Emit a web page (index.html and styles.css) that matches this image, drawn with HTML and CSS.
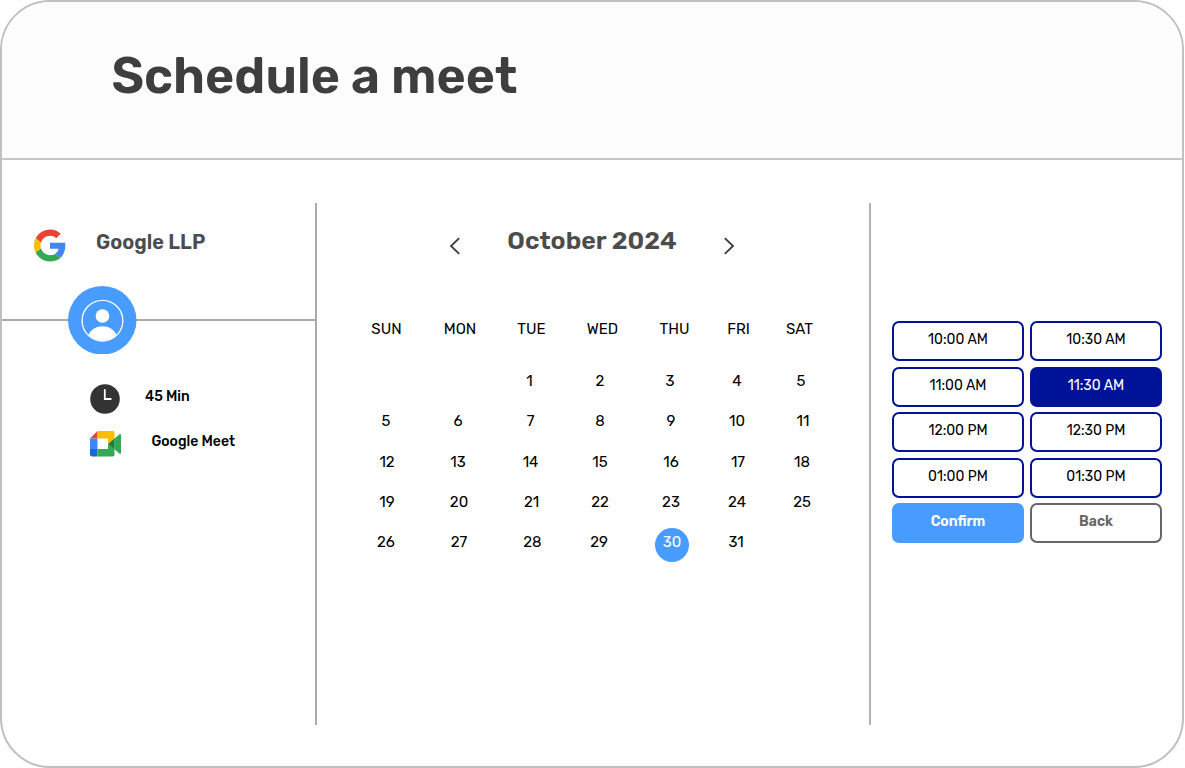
FILE: index.html
```html
<!DOCTYPE html>
<html lang="en">
<head>
<meta charset="utf-8">
<title>Schedule a meet</title>
<link rel="stylesheet" href="styles.css">
</head>
<body>
<main class="card">
  <header class="card-header"><h1 class="title">Schedule a meet</h1></header>
  <div class="panels">
    <aside class="info">
      <div class="company">
        <svg class="google" viewBox="0 0 48 48"><path fill="#EA4335" d="M24 9.5c3.54 0 6.71 1.22 9.21 3.6l6.85-6.85C35.9 2.38 30.47 0 24 0 14.62 0 6.51 5.38 2.56 13.22l7.98 6.19C12.43 13.72 17.74 9.5 24 9.5z"/><path fill="#4285F4" d="M46.98 24.55c0-1.57-.15-3.09-.38-4.55H24v9.02h12.94c-.58 2.96-2.26 5.48-4.78 7.18l7.73 6c4.51-4.18 7.09-10.36 7.09-17.65z"/><path fill="#FBBC05" d="M10.53 28.59c-.48-1.45-.76-2.99-.76-4.59s.27-3.14.76-4.59l-7.98-6.19C.92 16.46 0 20.12 0 24c0 3.88.92 7.54 2.56 10.78l7.97-6.19z"/><path fill="#34A853" d="M24 48c6.48 0 11.93-2.13 15.89-5.81l-7.73-6c-2.15 1.45-4.92 2.3-8.16 2.3-6.26 0-11.57-4.22-13.47-9.91l-7.98 6.19C6.51 42.62 14.62 48 24 48z"/></svg>
        <h2 class="company-name">Google LLP</h2>
      </div>
      <div class="divider">
        <svg class="avatar" viewBox="0 0 68 68"><circle cx="34" cy="34" r="34" fill="#489bff"/><circle cx="34.2" cy="34.4" r="20.2" fill="none" stroke="#fff" stroke-width="1.3"/><circle cx="34.2" cy="29.8" r="6.8" fill="#fff"/><path fill="#fff" d="M20.2 48.6C23 43.300 28 40 34.200 40s11.200 3.300 14 8.600a20.400 20.400 0 0 1-28 0z"/></svg>
      </div>
      <ul class="details">
        <li class="detail">
          <svg class="clock" viewBox="0 0 30 30"><circle cx="15" cy="15" r="14.800" fill="#333"/><path d="M14.800 5.800v9.200h6" fill="none" stroke="#fff" stroke-width="1.800" stroke-linecap="round"/></svg>
          <span class="duration">45 Min</span>
        </li>
        <li class="detail">
          <svg class="meet" viewBox="0 0 31 26"><path fill="#ea4335" d="M0 7.500 7.500 0v7.500z"/><path fill="#4285f4" d="M0 7.500h7.500V18H0z"/><path fill="#1967d2" d="M0 18h7.500v7.500H2a2 2 0 0 1-2-2z"/><path fill="#fbbc04" d="M7.500 0H22.500a2 2 0 0 1 2 2v6.500L18 13V7.500H7.500z"/><path fill="#34a853" d="M7.500 18H18v-5l6.500 5v5.500a2 2 0 0 1-2 2h-15z"/><path fill="#34a853" d="M24.500 7.500 29.300 3.400Q31 2.300 31 4v18q0 1.500-1.700.4L24.500 18.200z"/><path fill="#188038" d="M18 13l6.500-5.500v10.700z"/></svg>
          <span class="platform">Google Meet</span>
        </li>
      </ul>
    </aside>

    <section class="calendar">
      <div class="month-bar">
        <svg class="arrow" viewBox="0 0 12 18"><path d="M10.200 1.200 2 9l8.200 7.800"/></svg>
        <h2 class="month">October 2024</h2>
        <svg class="arrow" viewBox="0 0 12 18"><path d="M1.800 1.200 10 9l-8.200 7.800"/></svg>
      </div>
      <div class="weekdays"><span>SUN</span><span>MON</span><span>TUE</span><span>WED</span><span>THU</span><span>FRI</span><span>SAT</span></div>
      <div class="weeks">
        <div class="week"><span></span><span></span><span class="early">1</span><span>2</span><span class="early">3</span><span>4</span><span class="early">5</span></div>
        <div class="week"><span>5</span><span>6</span><span>7</span><span>8</span><span>9</span><span>10</span><span class="late">11</span></div>
        <div class="week"><span class="late">12</span><span>13</span><span>14</span><span>15</span><span>16</span><span class="late">17</span><span>18</span></div>
        <div class="week"><span class="late">19</span><span class="late">20</span><span class="late">21</span><span>22</span><span>23</span><span>24</span><span>25</span></div>
        <div class="week"><span>26</span><span class="late">27</span><span class="later">28</span><span class="early">29</span><span class="late"><b class="selected">30</b></span><span class="early">31</span><span></span></div>
      </div>
    </section>

    <section class="times">
      <div class="slots">
        <button class="slot">10:00 AM</button><button class="slot">10:30 AM</button>
        <button class="slot low">11:00 AM</button><button class="slot low chosen">11:30 AM</button>
        <button class="slot">12:00 PM</button><button class="slot">12:30 PM</button>
        <button class="slot low">01:00 PM</button><button class="slot low">01:30 PM</button>
        <button class="slot confirm">Confirm</button><button class="slot back">Back</button>
      </div>
    </section>
  </div>
</main>
</body>
</html>
```
FILE: styles.css
```css
* { box-sizing: border-box; }
body { margin: 0; background: #fff; font-family: Rubik, Roboto, sans-serif; color: #000; }
h1, h2, ul { margin: 0; padding: 0; }
svg { display: block; flex: none; }

.card { width: 1184px; height: 768px; border: 2px solid #c0c0c0; border-radius: 50px; background: #fefefe; overflow: hidden; }
.card-header { height: 158px; padding: 44px 0 0 109.500px; background: #fdfdfd; border-bottom: 2px solid #c6c6c6; }
.title { font-size: 50px; line-height: 60px; font-weight: 600; color: #3e3e3e; white-space: nowrap; }

.panels { display: grid; grid-template-columns: 315px 554px 1fr; height: 522px; margin-top: 43px; }
.info { border-right: 2px solid #ababab; }
.company { display: flex; align-items: flex-start; height: 116px; padding: 26px 0 0 31.500px; }
.google { width: 32px; height: 33px; }
.company-name { margin: 1px 0 0 30.500px; font-size: 20px; line-height: 24px; font-weight: 600; color: #4c4c4c; }
.divider { height: 2px; background: #ababab; display: flex; align-items: center; padding-left: 66px; }
.avatar { width: 68.500px; height: 68.500px; }
.details { list-style: none; padding: 63px 0 0 88px; }
.detail { display: flex; height: 46px; font-size: 14px; line-height: 18px; font-weight: 500; }
.clock { width: 30px; height: 30px; }
.meet { width: 31px; height: 26px; margin-top: 1px; }
.duration { margin: 4px 0 0 25px; }
.platform { margin: 2.500px 0 0 30.500px; }

.calendar { border-right: 2px solid #b1b1b1; }
.month-bar { display: flex; align-items: flex-start; justify-content: space-between; height: 116px; padding: 23px 134px 0 132px; }
.arrow { width: 12px; height: 18px; margin-top: 11px; fill: none; stroke: #3a3a3a; stroke-width: 1.800; }
.month { font-size: 25px; line-height: 30px; font-weight: 600; color: #4c4c4c; }
.weekdays, .week { display: flex; padding-left: 49px; font-size: 15px; line-height: 20px; text-align: center; }
.weekdays span, .week > span { width: 40px; flex: none; }
.weekdays { padding-left: 49.500px; }
.weekdays span:nth-child(2) { margin-left: 33.500px; }
.weekdays span:nth-child(3) { margin-left: 31.500px; }
.weekdays span:nth-child(4) { margin-left: 31px; }
.weekdays span:nth-child(5) { margin-left: 32px; }
.weekdays span:nth-child(6) { margin-left: 24px; }
.weekdays span:nth-child(7) { margin-left: 21px; }
.weeks { padding-top: 32px; }
.week { height: 40.250px; }
.week > span:nth-child(2) { margin-left: 32px; }
.week > span:nth-child(3) { margin-left: 32.500px; }
.week > span:nth-child(4) { margin-left: 29.500px; }
.week > span:nth-child(5) { margin-left: 31px; }
.week > span:nth-child(6) { margin-left: 26px; }
.week > span:nth-child(7) { margin-left: 25px; }
.week > .early { padding-right: 2px; }
.week > .late { padding-left: 2px; }
.week > .later { padding-left: 4px; }
.selected { display: block; width: 34px; height: 34px; margin: -4px auto 0; padding-top: 4px; border-radius: 50%; background: #489bff; color: #fff; font-weight: 400; }

.times { padding: 118px 0 0 21px; }
.slots { display: grid; grid-template-columns: 132px 132px; gap: 5.500px 6px; }
.slot { height: 40px; padding: 0 0 3px; border: 2px solid #001398; border-radius: 7px; background: #fff; color: #000; font: 400 14px/18px Rubik, Roboto, sans-serif; }
.low { padding-bottom: 2px; }
.chosen { background: #001398; color: #fff; }
.confirm { border-color: #489bff; background: #489bff; color: #fff; font-weight: 600; }
.back { border-color: #666; color: #666; font-weight: 600; }
```
